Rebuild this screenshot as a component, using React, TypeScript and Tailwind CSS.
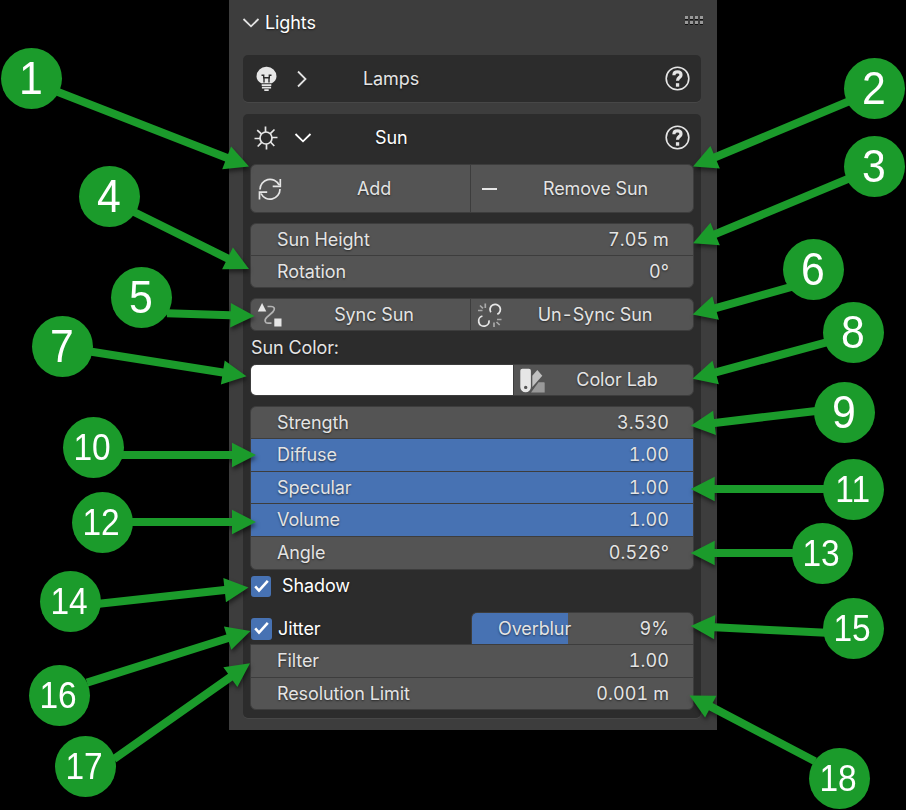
import React from "react";

type Callout = { n: number; cx: number; cy: number; from: [number, number]; tip: [number, number] };

const callouts: Callout[] = [
  { n: 1, cx: 31.5, cy: 78.5, from: [58, 92], tip: [249, 166.5] },
  { n: 2, cx: 874.5, cy: 88.5, from: [848.5, 101.5], tip: [693, 166.5] },
  { n: 3, cx: 874.5, cy: 166.5, from: [849, 178.5], tip: [693, 243.3] },
  { n: 4, cx: 109.5, cy: 196.5, from: [133, 211.5], tip: [249, 269] },
  { n: 5, cx: 141.5, cy: 297.5, from: [167, 313.3], tip: [254.5, 316] },
  { n: 6, cx: 813.5, cy: 269.5, from: [791.5, 286.8], tip: [692.5, 314.5] },
  { n: 7, cx: 62.5, cy: 346.5, from: [90, 351.5], tip: [246.5, 376.3] },
  { n: 8, cx: 853.5, cy: 332.5, from: [826.5, 342.3], tip: [692.5, 378.7] },
  { n: 9, cx: 844.5, cy: 412.5, from: [816, 411], tip: [690.7, 425.7] },
  { n: 10, cx: 93.5, cy: 447.5, from: [121, 455], tip: [256, 455] },
  { n: 11, cx: 853.5, cy: 489.5, from: [825, 489], tip: [690.7, 489] },
  { n: 12, cx: 102.5, cy: 522.5, from: [131, 522], tip: [256, 522] },
  { n: 13, cx: 822.5, cy: 553.5, from: [794, 553], tip: [690.7, 553] },
  { n: 14, cx: 70.5, cy: 601.5, from: [99, 603.7], tip: [248.5, 587.5] },
  { n: 15, cx: 853.5, cy: 628.5, from: [826, 632.7], tip: [690.7, 626] },
  { n: 16, cx: 59.5, cy: 695.5, from: [87, 682.6], tip: [250.5, 631] },
  { n: 17, cx: 85.5, cy: 766.5, from: [114, 759], tip: [250, 663.3] },
  { n: 18, cx: 839.5, cy: 778.5, from: [815, 761.2], tip: [689.5, 695.5] },
];

function Arrow({ from, tip }: Callout) {
  const dx = tip[0] - from[0];
  const dy = tip[1] - from[1];
  const len = Math.hypot(dx, dy);
  const angle = (Math.atan2(dy, dx) * 180) / Math.PI;
  const base = len - 24;
  return (
    <polygon
      transform={`translate(${from[0]} ${from[1]}) rotate(${angle})`}
      points={`0,-4 ${base},-4 ${base},-12.2 ${len},0 ${base},12.2 ${base},4 0,4`}
    />
  );
}

function Callouts() {
  return (
    <div className="pointer-events-none absolute inset-0">
      <svg className="absolute inset-0 [filter:drop-shadow(1px_3px_2px_rgba(0,0,0,0.5))]" width="906" height="810" fill="#1b9b2b">
        {callouts.map((c) => (
          <Arrow key={c.n} {...c} />
        ))}
      </svg>
      {callouts.map((c) => (
        <div
          key={c.n}
          className={
            "absolute flex size-[61px] items-center justify-center rounded-full bg-[#1b9b2b] pr-0.5 font-['Liberation_Sans',sans-serif] leading-none text-white " +
            (c.n < 10 ? "pb-0.5 text-[46px]" : "text-[36px]")
          }
          style={{ left: c.cx - 30.5, top: c.cy - 30.5 }}
        >
          <span className="scale-x-[0.93]">{c.n}</span>
        </div>
      ))}
    </div>
  );
}

function Chevron({ open, bright }: { open: boolean; bright?: boolean }) {
  return (
    <svg width="18" height="18" viewBox="0 0 18 18" fill="none" stroke={bright ? "#fff" : "#e2e2e2"} strokeWidth="1.8" className="shrink-0">
      {open ? <path d="M1.5 5 9 12.300l7.500-7.300" /> : <path d="M5 1.500l7.500 7.500L5 16.500" />}
    </svg>
  );
}

function HelpIcon() {
  return (
    <svg width="25" height="25" viewBox="0 0 25 25" fill="none" stroke="#e6e6e6" className="shrink-0">
      <circle cx="12.500" cy="12.500" r="11.300" strokeWidth="1.600" />
      <path d="M9 9.300V8.600c0-1.700 1.400-2.700 3.500-2.700s3.500 1 3.500 3c0 2.700-3.500 2.300-3.500 5.900" strokeWidth="3.200" />
      <rect x="10.900" y="17.200" width="3.300" height="3.500" fill="#e6e6e6" stroke="none" />
    </svg>
  );
}

function BulbIcon() {
  return (
    <svg width="23" height="26" viewBox="0 0 23 26" className="shrink-0">
      <path d="M11.500.8A9.700 9.700 0 0 0 1.500 10.400c0 3 2 5.200 4.700 6.900h10.600c2.700-1.700 4.700-3.900 4.700-6.900A9.700 9.700 0 0 0 11.500.8z" fill="#e6e6e6" />
      <path d="M6.500 9.300h2.200v2.400H14.300V9.300h2.200M9 11v5.500M14 11v5.500" stroke="#2c2c2c" strokeWidth="1.400" fill="none" />
      <path d="M6.700 19.100h9.600M6.900 21.600h9.200M9.300 24.100h4.400" stroke="#e6e6e6" strokeWidth="1.600" />
    </svg>
  );
}

function SunIcon() {
  return (
    <svg width="24" height="24" viewBox="0 0 24 24" fill="none" stroke="#e6e6e6" strokeWidth="1.700" className="shrink-0">
      <circle cx="12" cy="12" r="6" />
      <path d="M11.500.5V6M12.500 18v5.500M.5 12.500H6M18 11.500h5.500M3.200 4.200 7.500 8M16.500 16l3.800 4M20.500 3.500 16.300 7.700M7.700 16.300 3.700 20.500" />
    </svg>
  );
}

function RefreshIcon() {
  return (
    <svg width="24" height="24" viewBox="0 0 24 24" fill="none" stroke="#e6e6e6" strokeWidth="1.700" className="shrink-0">
      <path d="M2 12.500A10 10 0 0 1 21 8M22.300 2v7.300h-7.600M22 12A10 10 0 0 1 3 16.500M1.500 22.500v-7.300h7.700" />
    </svg>
  );
}

function SyncIcon() {
  return (
    <svg width="26" height="26" viewBox="0 0 26 26" className="shrink-0">
      <path d="M5.100 1 9.300 9.500H.8z" fill="#e6e6e6" />
      <rect x="17.300" y="16.500" width="7.200" height="8" fill="#e6e6e6" />
      <path d="M10.500 4.500H14c4 0 4.200 3.300 1.800 5.500L10 15.200c-3.500 3.300-1.500 6 1 6H14.500" fill="none" stroke="#b4b4b4" strokeWidth="1.700" />
    </svg>
  );
}

function UnlinkIcon() {
  return (
    <svg width="26" height="26" viewBox="0 0 26 26" fill="none" className="shrink-0">
      <path d="M13.800 10.300A5.200 5.200 0 1 1 20.300 12.300M5.400 14A5.200 5.200 0 1 0 12 18.300" stroke="#e6e6e6" strokeWidth="1.800" />
      <path d="M8.300 1.500V6M3 3.500 6 6.300M1 8.500h4.500M17 20.500V25M19.500 20l3.200 3M20 17.500h4.500" stroke="#a9a9a9" strokeWidth="1.700" />
    </svg>
  );
}

function SwatchesIcon() {
  return (
    <svg width="26" height="26" viewBox="0 0 26 26" className="shrink-0">
      <path d="M13.300 8.700 18.300 3l5 5.800-10 11.200z" fill="#c0c0c0" />
      <path d="M12 25.600 19.500 15.300H25a.7.7 0 0 1 .7.7v9.600z" fill="#999" />
      <path
        fillRule="evenodd"
        d="M3.300 1.700h6.600a2 2 0 0 1 2 2V20a5.300 5.300 0 0 1-10.600 0V3.700a2 2 0 0 1 2-2zM6.700 18.700a1.700 1.700 0 1 0 0 3.400 1.700 1.700 0 0 0 0-3.400z"
        fill="#e6e6e6"
      />
    </svg>
  );
}

function DragDots() {
  return (
    <div className="mt-4 grid grid-cols-4 gap-0.5">
      {Array.from({ length: 8 }, (_, i) => (
        <span key={i} className="size-[3px] bg-[#999] shadow-[0_1px_0_#111]" />
      ))}
    </div>
  );
}

function Check({ size }: { size: "sm" | "md" }) {
  return (
    <span className={"flex shrink-0 items-center justify-center rounded-[3px] bg-[#4772b3] " + (size === "sm" ? "h-[21px] w-5" : "h-[22px] w-[21px]")}>
      <svg width="21" height="21" viewBox="0 0 21 21" fill="none" stroke="#fff" strokeWidth="2.600" className="shrink-0">
        <path d="M4.200 10.300 8 14.500 16.800 4.800" />
      </svg>
    </span>
  );
}

function Field({ label, value, className }: { label: string; value: string; className: string }) {
  return (
    <div className={"flex items-center justify-between pr-6 pl-[26px] " + className}>
      <span>{label}</span>
      <span className="tracking-[0.1px] tabular-nums">{value}</span>
    </div>
  );
}

export default function App() {
  return (
    <div className="relative h-[810px] w-[906px] overflow-hidden bg-black pl-[229px]">
      <main className="flex h-[730px] w-[488px] flex-col bg-[#3d3d3d] px-3.5 font-['Inter',sans-serif] text-[18px] leading-6 tracking-[-0.1px] text-[#e4e4e4] [text-shadow:0_1px_2px_rgba(0,0,0,0.55)]">
        <header className="flex h-[55px] items-start justify-between">
          <div className="flex items-center pt-[11px] text-white">
            <span className="-ml-px">
              <Chevron open />
            </span>
            <span className="ml-[5px]">Lights</span>
          </div>
          <DragDots />
        </header>

        <section className="flex h-[47px] w-[458px] items-center rounded-[5px] bg-[#2c2c2c] pr-[11px] pl-3 shadow-[0_1px_0_#474747]">
          <BulbIcon />
          <span className="ml-[15px] flex">
            <Chevron open={false} />
          </span>
          <span className="flex-1 pl-[52px]">Lamps</span>
          <HelpIcon />
        </section>

        <section className="mt-3 h-[604px] w-[458px] rounded-[5px] bg-[#2c2c2c] px-[7px] shadow-[0_1px_0_#474747]">
          <div className="mb-[3px] flex h-[47px] items-center pr-1 pl-1 text-white">
            <SunIcon />
            <span className="ml-4 flex">
              <Chevron open bright />
            </span>
            <span className="flex-1 pl-[63px]">Sun</span>
            <HelpIcon />
          </div>

          <div className="flex h-[49px] w-[444px] divide-x divide-[#3d3d3d] rounded-md border border-[#3d3d3d] bg-[#545454]">
            <div className="flex w-[220px] items-center pl-[7px]">
              <RefreshIcon />
              <span className="flex-1 pr-1 text-center">Add</span>
            </div>
            <div className="flex flex-1 items-center pl-[11px]">
              <span className="h-0.5 w-[15px] bg-[#e6e6e6]" />
              <span className="flex-1 pl-px text-center">Remove Sun</span>
            </div>
          </div>

          <div className="mt-2.5 h-[65px] divide-y divide-[#3d3d3d] rounded-md border border-[#3d3d3d] bg-[#545454]">
            <Field label="Sun Height" value="7.05 m" className="h-8" />
            <Field label="Rotation" value="0°" className="h-[31px]" />
          </div>

          <div className="mt-2.5 flex h-[33px] divide-x divide-[#3d3d3d] rounded-md border border-[#3d3d3d] bg-[#545454]">
            <div className="flex w-[220px] items-center pl-1.5">
              <SyncIcon />
              <span className="flex-1 pr-[5px] text-center">Sync Sun</span>
            </div>
            <div className="flex flex-1 items-center pl-1.5">
              <UnlinkIcon />
              <span className="flex-1 pr-[6px] text-center">
                Un<span className="mx-[1.500px]">-</span>Sync Sun
              </span>
            </div>
          </div>

          <div className="flex h-[33px] items-center pl-px">Sun Color:</div>

          <div className="flex h-8 overflow-hidden rounded-md border border-[#3d3d3d] bg-[#545454]">
            <div className="w-[263px] border-r border-[#3d3d3d] bg-white" />
            <div className="flex flex-1 items-center pl-[5px]">
              <SwatchesIcon />
              <span className="flex-1 pr-1 text-center">Color Lab</span>
            </div>
          </div>

          <div className="mt-2.5 h-[164px] divide-y divide-[#3d3d3d] overflow-hidden rounded-md border border-[#3d3d3d] bg-[#545454]">
            <Field label="Strength" value="3.530" className="h-8" />
            <Field label="Diffuse" value="1.00" className="h-[33px] bg-[#4772b3]" />
            <Field label="Specular" value="1.00" className="h-8 bg-[#4772b3]" />
            <Field label="Volume" value="1.00" className="h-[33px] bg-[#4772b3]" />
            <Field label="Angle" value="0.526°" className="h-8" />
          </div>

          <div className="flex h-8 items-center gap-[11px] pl-px text-white">
            <Check size="sm" />
            <span>Shadow</span>
          </div>

          <div className="mt-2.5 flex h-8 justify-between">
            <div className="flex items-center gap-1.5 pt-px pl-px text-white">
              <Check size="md" />
              <span>Jitter</span>
            </div>
            <div className="w-[223px] overflow-hidden rounded-t-md border border-b-0 border-[#3d3d3d] bg-[linear-gradient(to_right,#4772b3_96px,#545454_96px)]">
              <Field label="Overblur" value="9%" className="h-[31px]" />
            </div>
          </div>
          <div className="h-[66px] divide-y divide-[#3d3d3d] rounded-b-md border border-[#3d3d3d] bg-[#545454]">
            <Field label="Filter" value="1.00" className="h-[33px]" />
            <Field label="Resolution Limit" value="0.001 m" className="h-[31px]" />
          </div>
        </section>
      </main>
      <Callouts />
    </div>
  );
}
